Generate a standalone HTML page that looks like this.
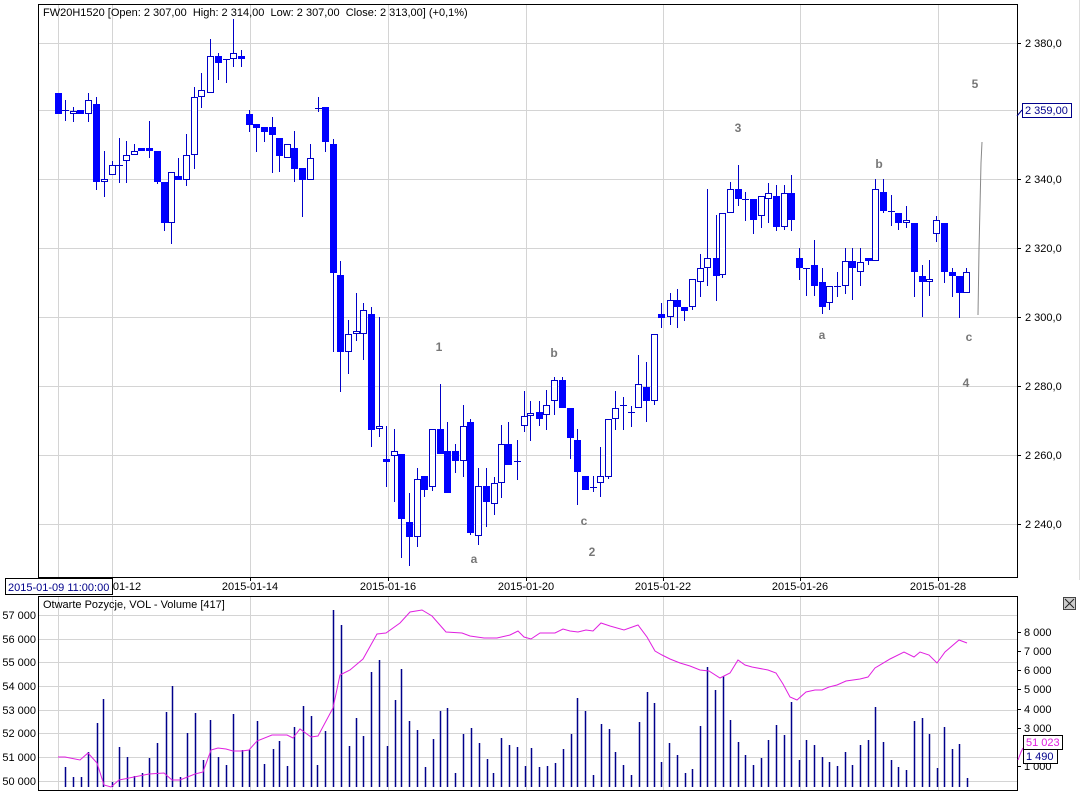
<!DOCTYPE html>
<html><head><meta charset="utf-8"><style>
html,body{margin:0;padding:0;background:#fff;width:1083px;height:793px;overflow:hidden}
svg{display:block;font-family:"Liberation Sans",sans-serif}
</style></head><body>
<svg id="s" width="1083" height="793" xmlns="http://www.w3.org/2000/svg">
<rect width="1083" height="793" fill="#fff"/>
<g id="grid" stroke="#d4d4d4" stroke-width="1"></g>
<g id="c"></g>
<polyline points="982,142 981,163 979,250 978,315" fill="none" stroke="#888" stroke-width="1"/>
<rect x="38.5" y="4.5" width="979" height="573" fill="none" stroke="#000"/>
<rect x="38.5" y="596.5" width="979" height="194" fill="none" stroke="#000"/>
<text x="43" y="16" font-size="11" fill="#000">FW20H1520 [Open: 2 307,00&#160; High: 2 314,00&#160; Low: 2 307,00&#160; Close: 2 313,00] (+0,1%)</text>
<text x="43" y="608" font-size="11" fill="#000">Otwarte Pozycje, VOL - Volume [417]</text>
<g font-size="12" font-weight="bold" fill="#777" text-anchor="middle">
<text x="439" y="351">1</text><text x="554" y="357">b</text><text x="584" y="525">c</text>
<text x="474" y="563">a</text><text x="592" y="556">2</text><text x="738" y="132">3</text>
<text x="822" y="339">a</text><text x="879" y="168">b</text><text x="975" y="88">5</text>
<text x="969" y="341">c</text><text x="966" y="387">4</text>
</g>
<g id="ax" font-size="11" fill="#000"></g>
<rect x="1022.5" y="103.5" width="49" height="14" fill="#fff" stroke="#00008b"/>
<line x1="1017" y1="116" x2="1022" y2="110" stroke="#00008b"/>
<text x="1025" y="114" font-size="11" fill="#00008b">2 359,00</text>
<rect x="5.5" y="578.5" width="107" height="16" fill="#fff" stroke="#000"/>
<text x="8" y="591" font-size="11" fill="#00008b">2015-01-09 11:00:00</text>
<rect x="1063.5" y="597.5" width="12" height="12" fill="#ccc" stroke="#444"/>
<path d="M1065 599 L1074 608 M1074 599 L1065 608" stroke="#222" stroke-width="1"/>
<polyline points="1018,760 1021,752 1023,748" fill="none" stroke="#e020e0"/>
<rect x="1023.5" y="735.5" width="39" height="14" fill="#fff" stroke="#000"/>
<text x="1026" y="746" font-size="11" fill="#e020e0">51 023</text>
<rect x="1023.5" y="749.5" width="34" height="14" fill="#fff" stroke="#000"/>
<text x="1026" y="760" font-size="11" fill="#00008b">1 490</text>
<line x1="1079.5" y1="0" x2="1079.5" y2="580" stroke="#ddd"/>
</svg>
<script>
var NS="http://www.w3.org/2000/svg";
function el(p,t,a,txt){var e=document.createElementNS(NS,t);for(var k in a)e.setAttribute(k,a[k]);if(txt!=null)e.textContent=txt;p.appendChild(e);return e;}
var g=document.getElementById('grid'),c=document.getElementById('c'),ax=document.getElementById('ax');
var vx=[58,112,250,388,526,663,800,938];
vx.forEach(function(x){el(g,'line',{x1:x+.5,y1:5,x2:x+.5,y2:577});el(g,'line',{x1:x+.5,y1:597,x2:x+.5,y2:790});});
var hy=[43,110,179,248,317,386,455,524],hl=['2 380,0','2 360,0','2 340,0','2 320,0','2 300,0','2 280,0','2 260,0','2 240,0'];
hy.forEach(function(y,i){el(g,'line',{x1:39,y1:y+.5,x2:1017,y2:y+.5});if(i!=1){el(ax,'line',{x1:1017,y1:y+.5,x2:1021,y2:y+.5,stroke:'#000'});el(ax,'text',{x:1025,y:y+4},hl[i]);}});
var by=[615,639,662,686,710,733,757,781];
by.forEach(function(y,i){el(g,'line',{x1:39,y1:y+.5,x2:1017,y2:y+.5});el(ax,'text',{x:36,y:y+4,'text-anchor':'end'},(57-i)+' 000');});
var ry=[632,651,670,689,709,728,766],rl=['8 000','7 000','6 000','5 000','4 000','3 000','1 000'];
ry.forEach(function(y,i){el(ax,'line',{x1:1017,y1:y+.5,x2:1021,y2:y+.5,stroke:'#000'});el(ax,'text',{x:1024,y:y+4},rl[i]);});
var dl=[[112,'01-12'],[250,'2015-01-14'],[388,'2015-01-16'],[526,'2015-01-20'],[663,'2015-01-22'],[800,'2015-01-26'],[938,'2015-01-28']];
dl.forEach(function(d){el(ax,'line',{x1:d[0]+.5,y1:577,x2:d[0]+.5,y2:581,stroke:'#000'});el(ax,'text',{x:d[0]==112?127:d[0],y:590,'text-anchor':'middle'},d[1]);});
var C=[[58,93,114,93,114,'f'],[65,110,110,100,121,'c'],[73,111,114,107,122,'h'],[80,110,114,110,114,'f'],[88,100,114,93,122,'h'],[96,104,182,97,190,'f'],[104,179,182,151,197,'h'],[112,165,175,161,175,'h'],[119,165,165,138,183,'c'],[126,155,161,141,183,'h'],[134,151,155,144,155,'h'],[141,148,151,148,151,'f'],[149,148,151,121,158,'f'],[157,151,182,151,184,'f'],[164,182,223,182,231,'f'],[171,172,223,172,244,'h'],[178,176,180,158,180,'f'],[186,155,180,134,186,'h'],[194,97,155,87,169,'h'],[201,90,97,73,108,'h'],[210,56,93,39,93,'h'],[218,56,63,53,80,'f'],[226,59,59,59,83,'c'],[233,53,59,19,67,'h'],[241,56,59,50,67,'f'],[249,114,125,110,132,'f'],[256,124,128,124,152,'f'],[264,127,132,127,142,'f'],[272,127,135,117,173,'f'],[279,138,156,138,172,'f'],[287,144,158,144,158,'h'],[294,148,169,131,182,'f'],[302,168,180,168,217,'f'],[310,158,180,144,180,'h'],[318,108,108,97,112,'c'],[325,107,142,107,152,'f'],[333,144,273,139,352,'f'],[340,275,352,261,392,'f'],[348,334,352,320,374,'h'],[356,331,334,293,341,'h'],[363,310,334,303,360,'h'],[371,314,430,307,447,'f'],[379,426,429,317,437,'h'],[386,459,462,426,487,'f'],[394,451,456,429,502,'h'],[401,454,519,454,558,'f'],[409,522,537,493,566,'f'],[417,479,537,468,547,'h'],[424,476,490,476,497,'f'],[432,429,487,429,491,'h'],[440,429,454,384,454,'f'],[447,451,493,422,493,'f'],[455,451,461,444,473,'f'],[463,426,461,405,477,'h'],[470,422,533,419,535,'f'],[478,486,536,468,545,'h'],[486,486,502,468,527,'f'],[494,483,504,477,515,'h'],[501,444,483,425,498,'h'],[508,444,465,422,465,'f'],[517,461,461,440,480,'c'],[524,416,426,391,432,'h'],[530,413,415,401,441,'h'],[539,412,419,401,426,'f'],[546,405,415,390,430,'h'],[554,380,401,377,415,'h'],[562,380,408,377,408,'f'],[570,408,438,408,459,'f'],[577,440,472,429,505,'f'],[585,476,490,476,490,'f'],[593,487,487,476,492,'c'],[600,476,483,447,497,'h'],[608,419,477,419,479,'h'],[615,408,419,391,430,'h'],[623,405,405,397,430,'c'],[631,412,412,406,427,'c'],[638,384,408,355,408,'h'],[646,387,401,362,422,'f'],[654,334,401,334,405,'h'],[661,314,318,303,328,'f'],[670,300,317,293,325,'h'],[677,300,307,289,328,'f'],[684,307,311,307,321,'f'],[692,279,307,279,310,'h'],[700,268,282,254,297,'h'],[707,258,268,189,286,'h'],[716,258,276,215,301,'f'],[722,213,275,213,278,'h'],[730,189,213,182,213,'h'],[738,189,199,165,206,'f'],[745,199,199,192,221,'c'],[753,199,220,199,234,'f'],[761,196,216,196,228,'h'],[768,193,199,183,223,'h'],[776,196,227,185,231,'f'],[784,193,227,185,230,'h'],[791,193,220,175,231,'f'],[799,258,268,248,280,'f'],[806,268,268,268,296,'c'],[814,265,286,240,296,'f'],[822,282,307,268,314,'f'],[829,286,303,286,310,'h'],[837,286,286,272,297,'c'],[845,261,286,248,294,'h'],[852,261,268,248,300,'f'],[860,262,272,248,286,'h'],[868,258,261,258,265,'f'],[875,189,261,179,261,'h'],[883,192,211,179,213,'f'],[891,211,211,195,226,'c'],[898,213,223,213,230,'f'],[906,220,223,206,228,'h'],[914,223,272,223,297,'f'],[922,276,282,265,317,'f'],[929,279,282,260,296,'h'],[936,220,234,216,242,'h'],[944,223,272,223,283,'f'],[952,272,276,268,297,'f'],[959,276,293,276,318,'f'],[966,272,293,268,293,'h']];
C.forEach(function(k){var x=k[0];
 el(c,'line',{x1:x+.5,y1:k[3],x2:x+.5,y2:k[4],stroke:'#0000c8'});
 if(k[5]=='c'){el(c,'line',{x1:x-3,y1:k[1]+.5,x2:x+4,y2:k[1]+.5,stroke:'#0000c8'});}
 else if(k[5]=='f'){el(c,'rect',{x:x-3,y:k[1],width:7,height:Math.max(3,k[2]-k[1]),fill:'#0000ff'});}
 else{el(c,'rect',{x:x-2.5,y:k[1]+.5,width:6,height:Math.max(2,k[2]-k[1]-1),fill:'#fff',stroke:'#0000c8'});}
});
var V=[[65,767],[73,777],[81,777],[88,752],[97,723],[103,699],[112,782],[119,747],[127,757],[134,776],[142,773],[149,758],[157,743],[166,712],[172,686],[180,777],[187,733],[195,713],[203,760],[210,720],[218,757],[226,765],[233,714],[242,750],[249,750],[257,721],[264,764],[273,749],[279,741],[287,766],[294,727],[303,706],[311,716],[317,765],[325,731],[333,610],[341,625],[349,746],[356,718],[363,736],[371,672],[379,660],[387,746],[395,700],[401,669],[409,721],[417,730],[425,767],[433,739],[440,711],[447,708],[455,773],[463,734],[471,728],[479,743],[487,759],[493,773],[501,738],[509,745],[517,747],[525,766],[531,748],[539,767],[547,766],[555,763],[563,749],[571,734],[577,698],[585,711],[593,775],[601,724],[609,729],[615,752],[623,765],[631,775],[639,722],[647,692],[654,703],[661,762],[669,743],[677,755],[685,773],[692,769],[700,726],[707,667],[715,690],[723,676],[730,720],[738,742],[745,755],[753,765],[761,758],[768,740],[776,725],[784,735],[791,702],[799,760],[806,740],[814,745],[822,757],[829,762],[837,766],[845,752],[852,765],[860,745],[868,740],[875,707],[883,742],[891,760],[898,767],[906,770],[914,721],[922,718],[929,734],[937,768],[944,727],[952,749],[959,744],[967,778]];
V.forEach(function(v){el(c,'line',{x1:v[0]+.5,y1:v[1],x2:v[0]+.5,y2:787,stroke:'#00008b','stroke-width':1.5});});
var P="58,757 65,757 80,760 88,753 97,763 104,785 111,787 119,780 134,777 149,774 164,773 172,780 180,780 195,774 203,772 211,750 218,748 226,749 233,751 242,751 249,750 257,741 272,735 287,735 293,738 300,729 311,737 318,736 333,708 340,675 350,670 363,659 377,634 386,633 400,623 410,612 422,610 432,616 446,632 462,633 470,636 484,638 497,638 510,635 518,631 524,637 531,639 540,633 547,633 555,633 563,629 570,631 578,632 586,630 593,631 601,623 610,626 624,630 638,625 647,637 655,651 662,655 670,659 680,663 690,666 700,670 709,671 720,678 730,673 738,660 745,665 752,667 768,670 776,673 783,684 790,697 797,700 806,692 815,690 822,690 829,687 837,685 846,681 860,679 868,677 875,668 890,659 904,652 914,657 920,652 929,655 937,663 945,652 959,640 967,643";
el(c,'polyline',{points:P,fill:'none',stroke:'#e020e0','stroke-width':1});
</script>
</body></html>
